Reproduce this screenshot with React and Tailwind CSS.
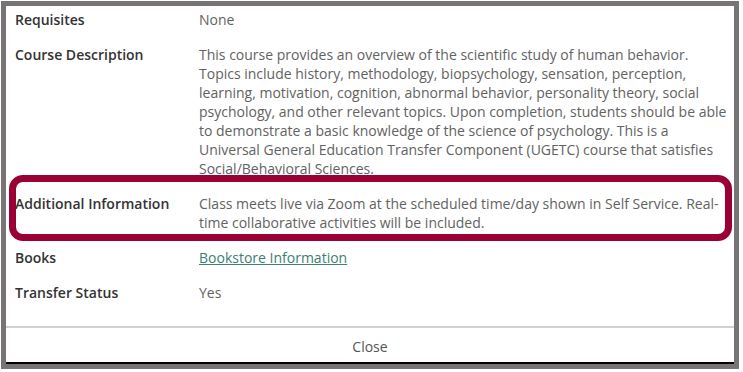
export default function App() {
  const rows = [
    { label: "Requisites", value: "None" },
    {
      label: "Course Description",
      value:
        "This course provides an overview of the scientific study of human behavior. Topics include history, methodology, biopsychology, sensation, perception, learning, motivation, cognition, abnormal behavior, personality theory, social psychology, and other relevant topics. Upon completion, students should be able to demonstrate a basic knowledge of the science of psychology. This is a Universal General Education Transfer Component (UGETC) course that satisfies Social/Behavioral Sciences.",
    },
    {
      label: "Additional Information",
      value:
        "Class meets live via Zoom at the scheduled time/day shown in Self Service. Real-time collaborative activities will be included.",
      highlight: true,
    },
    { label: "Books", value: "Bookstore Information", link: true },
    { label: "Transfer Status", value: "Yes" },
  ];

  return (
    <div
      className="w-[743px] h-[372px] bg-white p-px"
      style={{ fontFamily: '"Open Sans", "Liberation Sans", sans-serif' }}
    >
      <div className="w-[738px] h-[368px] border-[5px] border-[#787475] bg-white flex flex-col">
        {/* Details */}
        <div className="flex-1 overflow-hidden">
          <div className="-mt-[4px]">
            {rows.map((row) => (
              <div key={row.label} className="relative flex py-2 text-[14px] leading-[19px]">
                <div className="w-[193px] shrink-0 pl-[9px] font-semibold text-[#333]">
                  {row.label}
                </div>
                <div className="flex-1 pr-[4px] text-[#626262]">
                  {row.link ? (
                    <a href="#" className="text-[#3b8072] underline">
                      {row.value}
                    </a>
                  ) : (
                    row.value
                  )}
                </div>
                {row.highlight && (
                  <div className="absolute -top-[11px] -bottom-px left-[3px] right-[2px] border-[7px] border-[#9a0036] rounded-[14px]" />
                )}
              </div>
            ))}
          </div>
        </div>

        {/* Footer */}
        <div className="h-[38px] pt-[3px] border-t-2 border-[#d0d0d0] border-b-2 border-b-black flex items-center justify-center text-[14px] text-[#555]">
          Close
        </div>
      </div>
    </div>
  );
}
